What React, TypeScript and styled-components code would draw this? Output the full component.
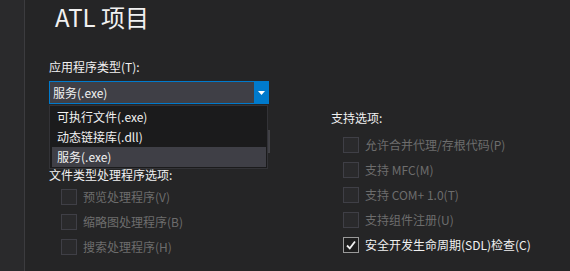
import React from "react";
import styled, { createGlobalStyle } from "styled-components";

const Global = createGlobalStyle`
  html, body { margin: 0; padding: 0; background: #252526; }
  body { font-family: "Noto Sans CJK SC", "Noto Sans", sans-serif; color: #f1f1f1; }
`;

const Root = styled.div`
  display: flex;
  width: 570px;
  height: 271px;
  overflow: hidden;
  background: #252526;
`;

const SideStrip = styled.div`
  width: 24px;
  flex: none;
  background: #2a2a2c;
  border-right: 1px solid #3c3c3f;
`;

const Main = styled.div`
  position: relative;
  flex: 1;
  padding-left: 24px;
`;

const Title = styled.h1`
  margin: 0 0 0 6px;
  height: 57px;
  font-size: 24px;
  font-weight: 400;
  line-height: 34px;
  color: #f1f1f1;
  font-family: "Noto Sans CJK SC", "Noto Sans", sans-serif;
`;

const Columns = styled.div`
  display: grid;
  grid-template-columns: 220px 1fr;
  column-gap: 62px;
`;

const Column = styled.div<{ $top?: number }>`
  display: flex;
  flex-direction: column;
  padding-top: ${(p) => p.$top ?? 0}px;
`;

const Label = styled.div<{ $h?: number; $mt?: number }>`
  font-size: 12px;
  line-height: ${(p) => p.$h ?? 20}px;
  height: ${(p) => p.$h ?? 20}px;
  margin-top: ${(p) => p.$mt ?? 0}px;
  color: #f1f1f1;
  white-space: nowrap;
`;

const Select = styled.div`
  margin-top: 4px;
  height: 23px;
  box-sizing: border-box;
  border: 1px solid #007acc;
  background: #3f3f46;
  display: flex;
  align-items: center;
`;

const SelectValue = styled.div`
  flex: 1;
  padding-left: 3px;
  font-size: 12px;
  color: #f1f1f1;
`;

const SelectButton = styled.div`
  width: 14px;
  align-self: stretch;
  background: #007acc;
  display: flex;
  align-items: center;
  justify-content: center;
`;

const HiddenBox = styled.div`
  margin-top: 26px;
  margin-right: -1px;
  height: 23px;
  box-sizing: border-box;
  background: #3f3f46;
  border: 1px solid #434346;
`;

const Row = styled.div`
  display: flex;
  align-items: center;
  height: 25px;
  padding-left: 12px;
  gap: 6px;
`;

const Box = styled.div<{ $checked?: boolean }>`
  width: 16px;
  height: 16px;
  box-sizing: border-box;
  border: 1px solid ${(p) => (p.$checked ? "#9a9a9a" : "#3f3f46")};
  background: ${(p) => (p.$checked ? "#1e1e1e" : "#2a2a2c")};
  display: flex;
  align-items: center;
  justify-content: center;
`;

const RowText = styled.span<{ $enabled?: boolean }>`
  font-size: 12px;
  color: ${(p) => (p.$enabled ? "#f1f1f1" : "#6d6d6d")};
  white-space: nowrap;
`;

const Popup = styled.div`
  position: absolute;
  left: 24px;
  top: 105px;
  width: 219px;
  box-sizing: border-box;
  padding: 1px 1px 1px 2px;
  background: #1b1b1c;
  border: 1px solid #333337;
`;

const PopupItem = styled.div<{ $active?: boolean }>`
  height: 20px;
  line-height: 20px;
  padding-left: 5px;
  font-size: 12px;
  color: #f1f1f1;
  background: ${(p) => (p.$active ? "#3f3f46" : "transparent")};
`;

const Check = ({ label, checked, enabled }: { label: string; checked?: boolean; enabled?: boolean }) => (
  <Row>
    <Box $checked={checked}>
      {checked && (
        <svg width="12" height="12" viewBox="0 0 12 12">
          <path d="M2 6.5 L4.8 9.3 L10 2.5" fill="none" stroke="#f1f1f1" strokeWidth="1.8" />
        </svg>
      )}
    </Box>
    <RowText $enabled={enabled}>{label}</RowText>
  </Row>
);

export default function App() {
  return (
    <Root>
      <Global />
      <SideStrip />
      <Main>
        <Title>ATL 项目</Title>
        <Columns>
          <Column>
            <Label>应用程序类型(T):</Label>
            <Select>
              <SelectValue>服务(.exe)</SelectValue>
              <SelectButton>
                <svg width="7" height="4" viewBox="0 0 7 4">
                  <path d="M0 0 H7 L3.5 4 Z" fill="#ffffff" />
                </svg>
              </SelectButton>
            </Select>
            <HiddenBox />
            <Label $h={18} $mt={13}>文件类型处理程序选项:</Label>
            <Check label="预览处理程序(V)" />
            <Check label="缩略图处理程序(B)" />
            <Check label="搜索处理程序(H)" />
          </Column>
          <Column $top={51}>
            <Label>支持选项:</Label>
            <div style={{ height: 4 }} />
            <Check label="允许合并代理/存根代码(P)" />
            <Check label="支持 MFC(M)" />
            <Check label="支持 COM+ 1.0(T)" />
            <Check label="支持组件注册(U)" />
            <Check label="安全开发生命周期(SDL)检查(C)" checked enabled />
          </Column>
        </Columns>
        <Popup>
          <PopupItem>可执行文件(.exe)</PopupItem>
          <PopupItem>动态链接库(.dll)</PopupItem>
          <PopupItem $active>服务(.exe)</PopupItem>
        </Popup>
      </Main>
    </Root>
  );
}
